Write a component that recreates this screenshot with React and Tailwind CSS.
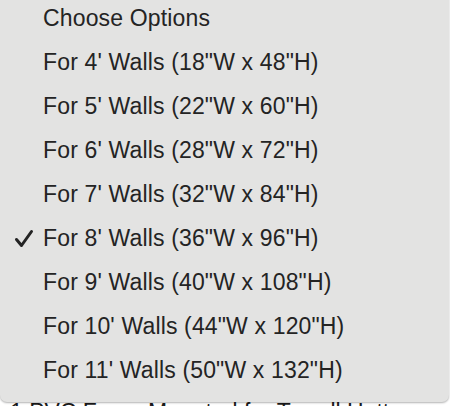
import React from "react";

const items = [
  "Choose Options",
  "For 4' Walls (18\"W x 48\"H)",
  "For 5' Walls (22\"W x 60\"H)",
  "For 6' Walls (28\"W x 72\"H)",
  "For 7' Walls (32\"W x 84\"H)",
  "For 8' Walls (36\"W x 96\"H)",
  "For 9' Walls (40\"W x 108\"H)",
  "For 10' Walls (44\"W x 120\"H)",
  "For 11' Walls (50\"W x 132\"H)",
];

export default function App() {
  return (
    <div
      className="w-[450px] h-[406px] overflow-hidden bg-white"
      style={{ fontFamily: '"Liberation Sans", Arial, sans-serif' }}
    >
      <div className="relative w-[449px] -mt-[4px] pb-[10px] bg-[#e3e3e2] rounded-b-[7px] shadow-[0_1px_2px_rgba(0,0,0,0.3)] z-10">
        {items.map((t, i) => (
          <div key={i} className="h-[44px] flex items-center text-[23px] tracking-[0.15px] text-[#242424]">
            <div className="w-[43px] flex justify-end pr-[9px]">
              {i === 5 && (
                <svg width="20" height="19" viewBox="0 0 20 19" className="mt-[1px]">
                  <path d="M2.5 10.5 L7.5 16.5 L17.5 2.5" fill="none" stroke="#242424" strokeWidth="3" strokeLinecap="round" strokeLinejoin="round" />
                </svg>
              )}
            </div>
            <span>{t}</span>
          </div>
        ))}
      </div>
      <div className="-mt-[4px] pl-[10px] text-[23px] text-[#1a1a1a] whitespace-nowrap leading-[28px]">
        1 PVC Foam Mounted for Towall Hatt
      </div>
    </div>
  );
}
